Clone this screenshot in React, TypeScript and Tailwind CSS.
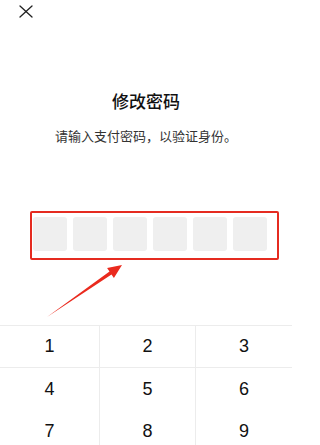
import React from 'react';

const keys = ['1', '2', '3', '4', '5', '6', '7', '8', '9'];

const App = () => {
  return (
    <div className="relative w-[292px] h-[445px] overflow-hidden bg-white font-['Noto_Sans_CJK_SC',sans-serif]">
      {/* Close */}
      <div className="pl-[19px] pt-[5px] h-[18px]">
        <svg width="14" height="13" viewBox="0 0 14 13" fill="none" stroke="#222" strokeWidth="1.3" strokeLinecap="round">
          <line x1="1" y1="1" x2="13" y2="12" />
          <line x1="13" y1="1" x2="1" y2="12" />
        </svg>
      </div>

      {/* Heading */}
      <h1 className="mt-[71px] text-center text-[17px] leading-[24px] font-medium text-[#111]">修改密码</h1>
      <p className="mt-[13px] text-center text-[13px] leading-[20px] text-[#333]">请输入支付密码，以验证身份。</p>

      {/* Password boxes (annotated) */}
      <div className="mt-[65px] ml-[30px] w-[249px] h-[49px] border-2 border-[#e52b20] rounded-[2px] flex items-start pt-[4px] pl-[1px] gap-[6px]">
        {Array.from({ length: 6 }).map((_, i) => (
          <div key={i} className="w-[34px] h-[34px] rounded-[3px] bg-[#efefef]" />
        ))}
      </div>

      {/* Keypad */}
      <div className="mt-[65px] grid grid-cols-[100px_96px_1fr] border-t border-[#ececec] font-['Liberation_Sans',sans-serif]">
        {keys.map((k, i) => (
          <div
            key={k}
            className={
              'h-[42px] flex items-center justify-center text-[18px] text-[#111] ' +
              (i % 3 !== 2 ? 'border-r border-[#ececec] ' : '') +
              (i < 3 ? 'border-b border-[#ececec]' : '')
            }
          >
            {k}
          </div>
        ))}
      </div>

      {/* Red arrow annotation */}
      <svg className="absolute left-0 top-0 pointer-events-none" width="292" height="445" viewBox="0 0 292 445">
        <polygon
          points="47,317 111.5,274.5 113.9,277.9 122,265 107.1,268.1 109.5,271.5"
          fill="#ea2a1e"
        />
      </svg>
    </div>
  );
};

export default App;
